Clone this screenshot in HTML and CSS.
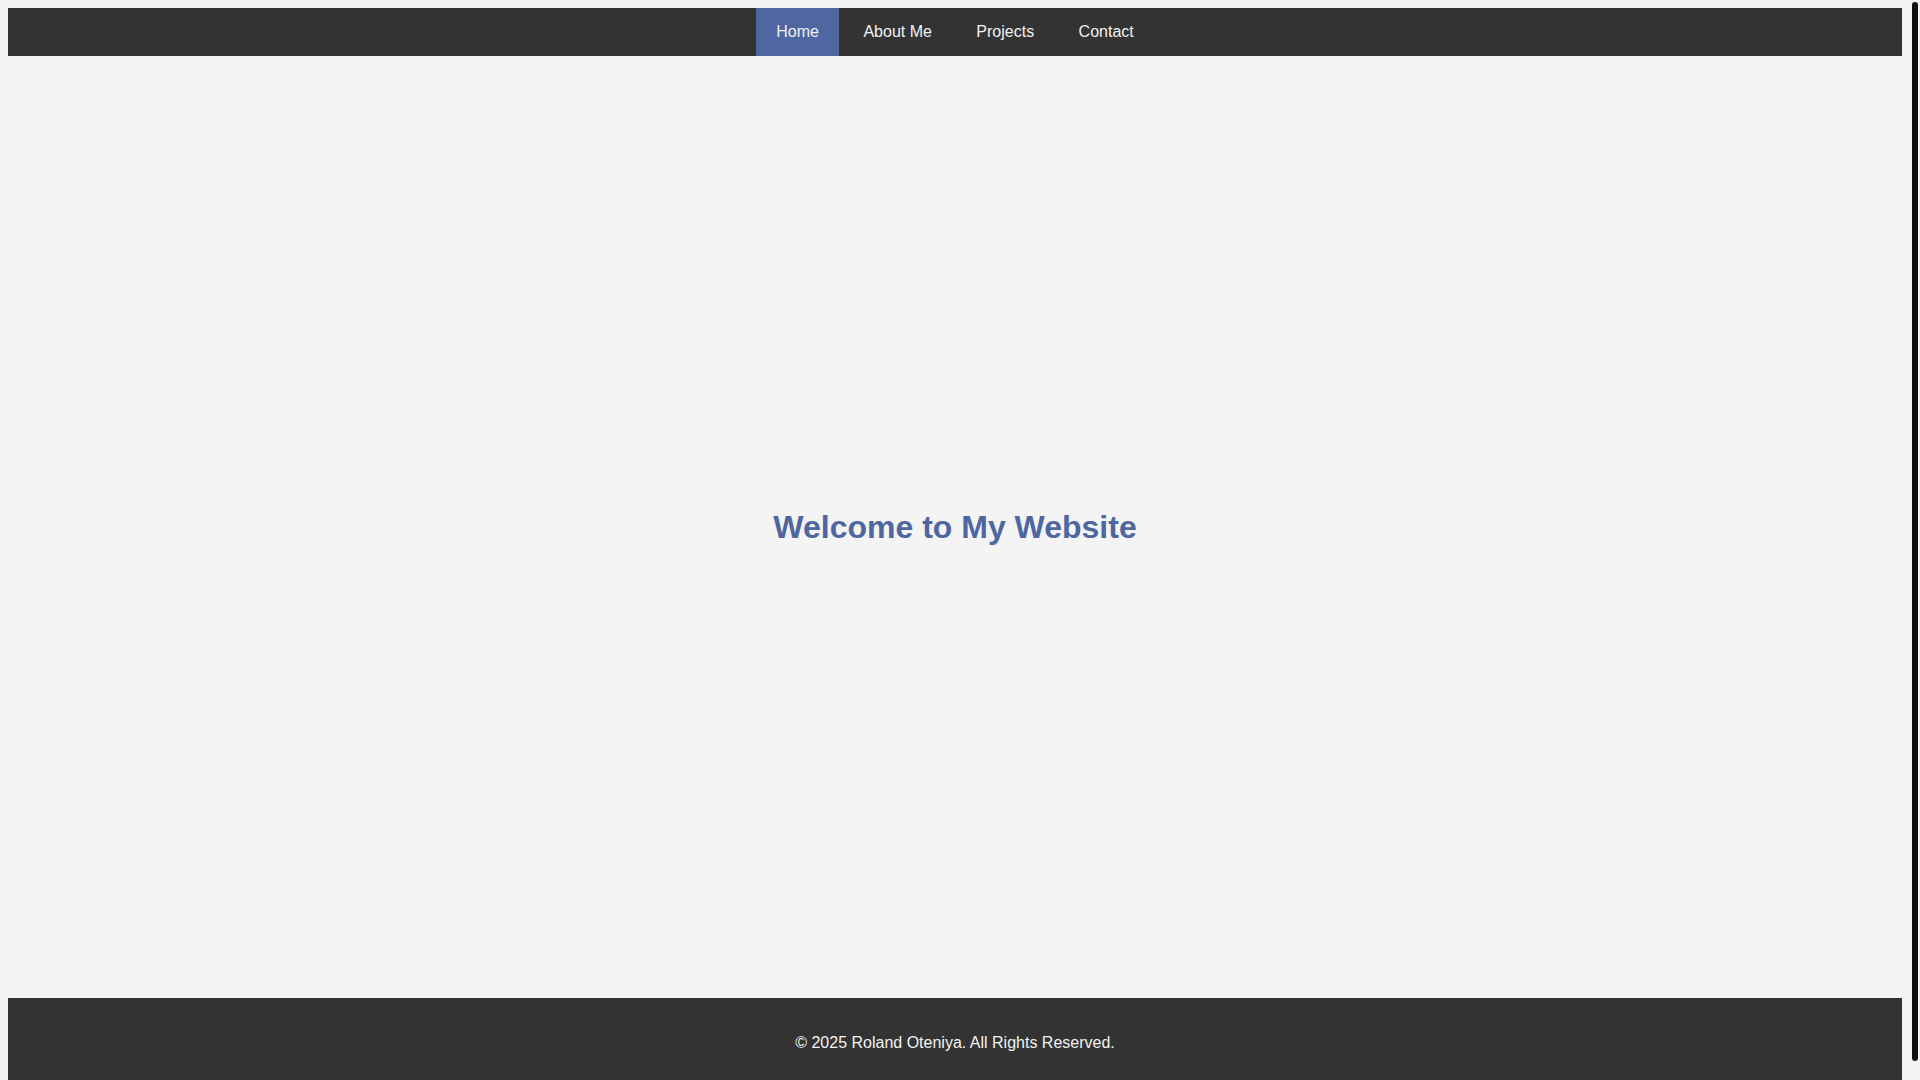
FILE: index.html
```html
<!DOCTYPE html>
<html lang="en">
<head>
<meta charset="utf-8">
<title>Roland Oteniya</title>
<link rel="stylesheet" href="styles.css">
</head>
<body>
<nav class="nav">
  <ul class="nav-list">
    <li class="nav-item"><a class="nav-link active" href="#">Home</a></li>
    <li class="nav-item"><a class="nav-link" href="#">About Me</a></li>
    <li class="nav-item"><a class="nav-link" href="#">Projects</a></li>
    <li class="nav-item"><a class="nav-link" href="#">Contact</a></li>
  </ul>
</nav>
<main class="main">
  <h1 class="title">Welcome to My Website</h1>
</main>
<footer class="footer">
  <p class="footer-text">&copy; 2025 Roland Oteniya. All Rights Reserved.</p>
</footer>
<div class="scrollbar" aria-hidden="true"><div class="scrollbar-thumb"></div></div>
</body>
</html>
```

FILE: styles.css
```css
html {
  background: #f4f4f4;
}
body {
  margin: 8px 18px 8px 8px;
  min-height: 100vh;
  display: flex;
  flex-direction: column;
  background: #f4f4f4;
  font-family: "Liberation Sans", Arial, sans-serif;
  font-size: 16px;
}
.nav {
  background: #333333;
  text-align: center;
}
.nav-list {
  list-style: none;
  margin: 0;
  padding: 0;
  font-size: 16px;
}
.nav-item {
  display: inline-block;
}
.nav-link {
  display: block;
  padding: 15px 20px;
  line-height: 18px;
  color: #f2f2f2;
  text-decoration: none;
}
.nav-link.active {
  background: #4f67a1;
}
.main {
  flex: 1;
  display: flex;
  align-items: center;
  justify-content: center;
}
.title {
  margin: 0;
  font-size: 32px;
  font-weight: bold;
  color: #4f67a1;
}
.footer {
  background: #333333;
  padding: 20px;
  text-align: center;
  color: #f2f2f2;
}
.footer-text {
  margin: 16px 0;
  line-height: 18px;
}
.scrollbar {
  position: fixed;
  top: 0;
  right: 0;
  width: 10px;
  height: 100vh;
  background: #f4f4f4;
  padding: 2px 2px 0;
  box-sizing: border-box;
}
.scrollbar-thumb {
  height: 1059px;
  background: #111111;
  border-radius: 3px;
}
```
